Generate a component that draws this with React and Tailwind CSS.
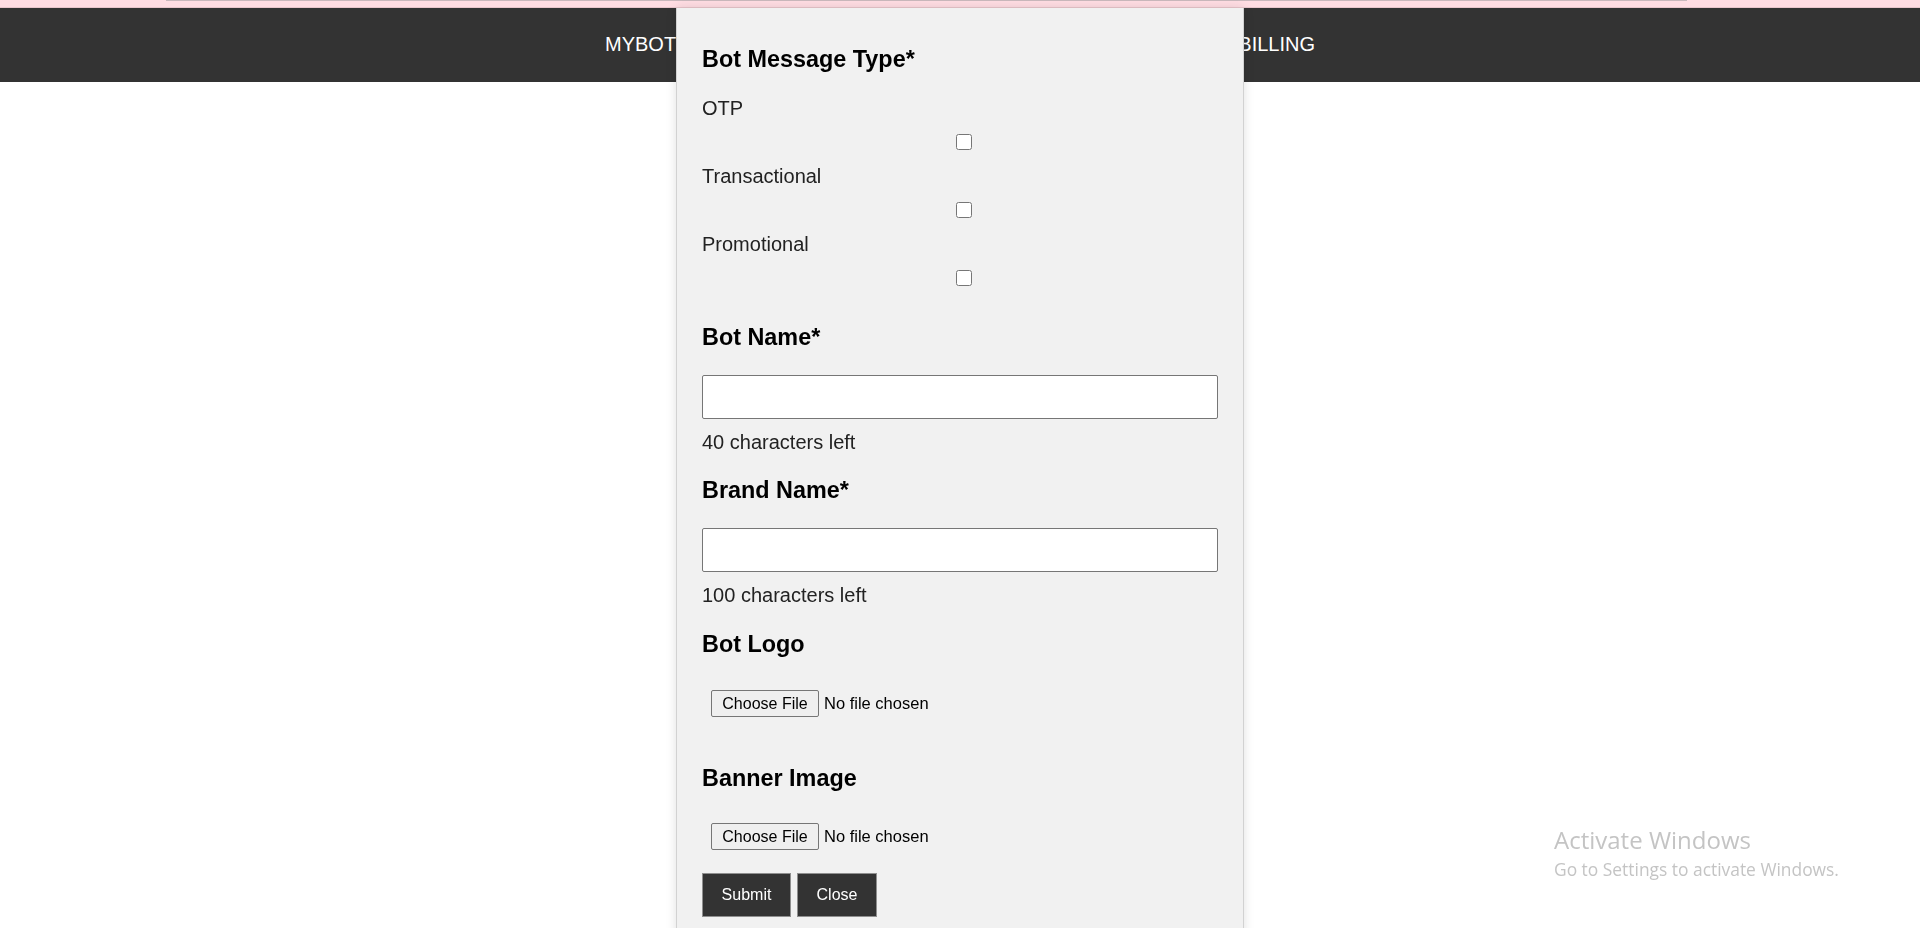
import { useState } from 'react';

const heading = "text-[23.4px] leading-[27px] font-bold text-black";
const body = "text-[20px] leading-[23px] text-[#222]";

function FileRow({ className }) {
  return (
    <div className={`flex items-center h-[27px] ml-[9px] ${className}`}>
      <span className="h-[27px] w-[108px] flex items-center justify-center bg-[#efefef] border border-[#767676] rounded-[2px] text-[16px] text-black">
        Choose File
      </span>
      <span className="ml-[5px] text-[16.5px] text-black">No file chosen</span>
    </div>
  );
}

function Option({ label, first }) {
  return (
    <>
      <div className={`${body} ${first ? 'mt-[24px]' : 'mt-[15px]'}`}>{label}</div>
      <div className="mt-[14px] flex justify-center pl-[8px] h-[16px]">
        <input type="checkbox" className="w-[16px] h-[16px] m-0" />
      </div>
    </>
  );
}

export default function App() {
  const [botName, setBotName] = useState('');
  const [brandName, setBrandName] = useState('');

  return (
    <div className="min-h-screen bg-white font-['Liberation_Sans',Arial,sans-serif] relative">
      {/* bandeau rose du haut */}
      <div className="h-[8px] bg-[#ffdde3] border-b border-[#e9c6cc]">
        <div className="ml-[166px] w-[1521px] h-[1px] bg-[#c9b8bc]" />
      </div>

      {/* barre de nav */}
      <nav className="h-[74px] bg-[#333333] flex items-center justify-center">
        <div className="w-[710px] flex justify-between text-white text-[20px] leading-[23px] -mt-[2px]">
          <span>MYBOTS</span>
          <span>BILLING</span>
        </div>
      </nav>

      {/* modal */}
      <div className="fixed top-[8px] left-[676px] w-[568px] bg-[#f1f1f1] border-x border-[#d2d2d2] shadow-[0_0_10px_rgba(0,0,0,0.12)] px-[25px] pt-[38px] pb-[24px]">
        <h3 className={heading}>Bot Message Type*</h3>
        <Option label="OTP" first />
        <Option label="Transactional" />
        <Option label="Promotional" />

        <h3 className={`${heading} mt-[38px]`}>Bot Name*</h3>
        <input
          value={botName}
          onChange={(e) => setBotName(e.target.value)}
          className="mt-[24px] block w-full h-[44px] bg-white border border-[#767676] rounded-[2px]"
        />
        <div className={`${body} mt-[12px]`}>{40 - botName.length} characters left</div>

        <h3 className={`${heading} mt-[23px]`}>Brand Name*</h3>
        <input
          value={brandName}
          onChange={(e) => setBrandName(e.target.value)}
          className="mt-[24px] block w-full h-[44px] bg-white border border-[#767676] rounded-[2px]"
        />
        <div className={`${body} mt-[12px]`}>{100 - brandName.length} characters left</div>

        <h3 className={`${heading} mt-[24px]`}>Bot Logo</h3>
        <FileRow className="mt-[32px]" />

        <h3 className={`${heading} mt-[48px]`}>Banner Image</h3>
        <FileRow className="mt-[31px]" />

        <div className="mt-[23px] flex gap-[6px]">
          <button className="h-[44px] w-[89px] bg-[#333333] border border-[#8f8f8f] text-white text-[16px]">Submit</button>
          <button className="h-[44px] w-[80px] bg-[#333333] border border-[#8f8f8f] text-white text-[16px]">Close</button>
        </div>
      </div>

      {/* filigrane windows */}
      <div className="fixed left-[1554px] top-[824px] text-[#c4c4c4] font-['Open_Sans',sans-serif] pointer-events-none">
        <div className="text-[24px] leading-[32px]">Activate Windows</div>
        <div className="text-[17.4px] leading-[24px] mt-[1px]">Go to Settings to activate Windows.</div>
      </div>
    </div>
  );
}
